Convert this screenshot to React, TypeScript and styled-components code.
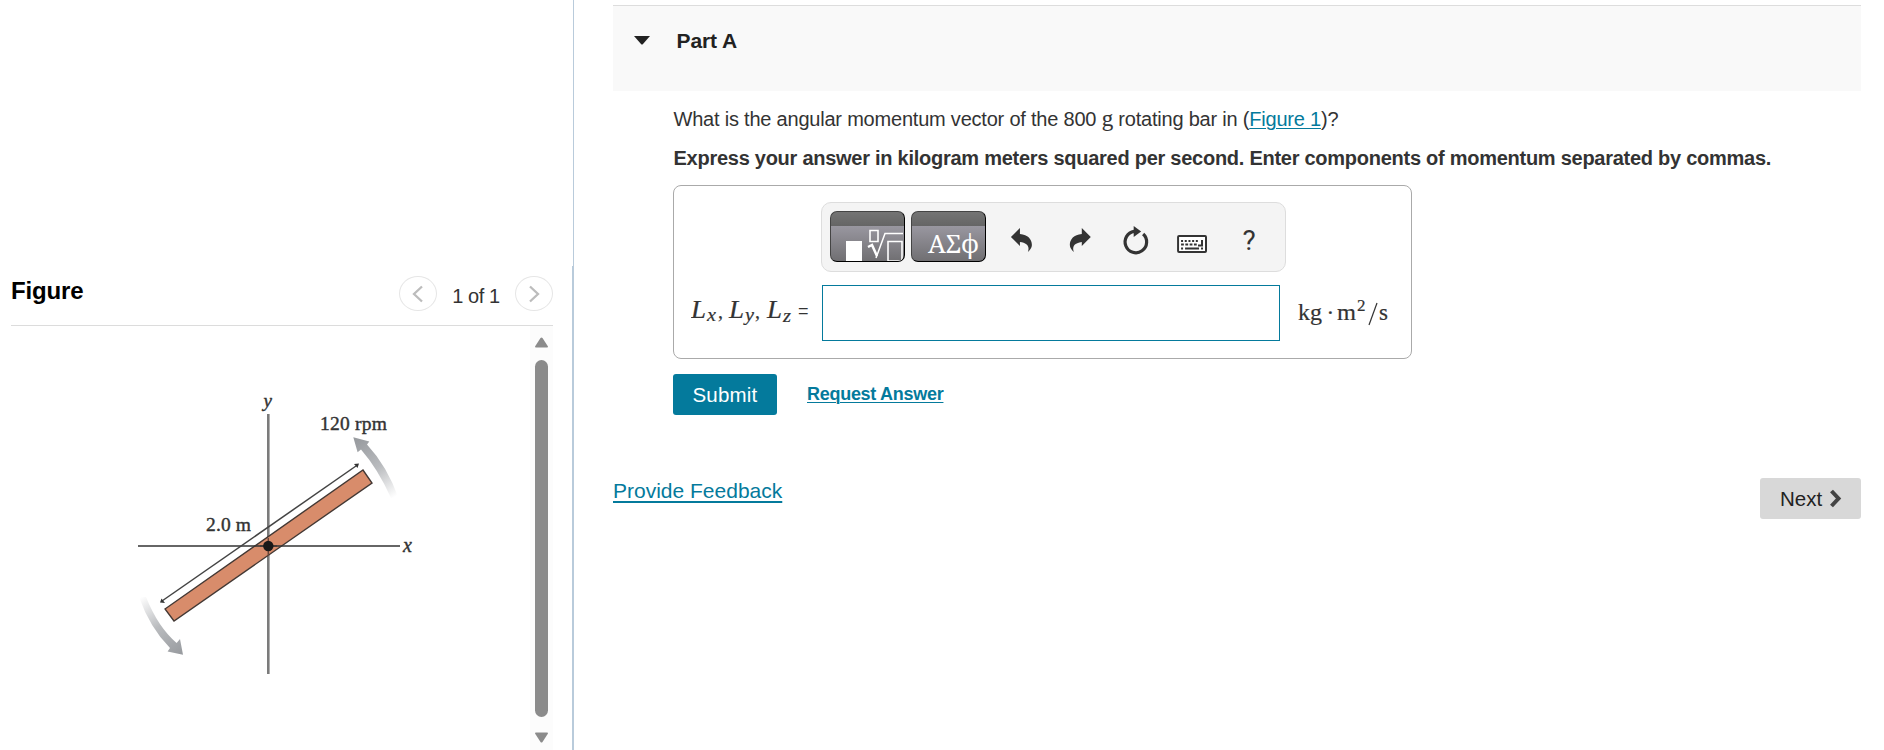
import React from 'react';
import styled, { createGlobalStyle } from 'styled-components';

const Global = createGlobalStyle`
  *{box-sizing:border-box}
  body{margin:0;background:#fff;color:#333;font-family:"Liberation Sans",Arial,sans-serif;overflow:hidden}
  p,h1,h2{margin:0}
`;
const Page = styled.div`display:flex;width:1884px;height:750px;background:#fff;`;
const FigurePane = styled.aside`width:574px;height:750px;display:flex;flex-direction:column;`;
const PaneTop = styled.div`height:266px;flex:none;border-right:1px solid #b9cbdb;`;
const PaneBody = styled.div`flex:1;border-right:2px solid #b9cbdb;padding-left:11px;`;
const FigureHeader = styled.div`width:542px;height:60px;border-bottom:1px solid #dcdcdc;display:flex;align-items:flex-start;padding-top:10px;`;
const FigureTitle = styled.h2`flex:1;font-size:24px;line-height:28px;font-weight:700;color:#000;padding-top:1px;letter-spacing:-.15px;`;
const PagerButton = styled.button`width:38px;height:35px;border-radius:50%;border:1px solid #e6e6e6;background:#fff;padding:0;display:grid;place-items:center;`;
const PagerText = styled.span`width:78px;text-align:center;font-size:20px;line-height:24px;padding-top:8px;color:#333;letter-spacing:-.4px;`;
const FigureScroll = styled.div`width:542px;height:424px;display:flex;`;
const FigureCanvas = styled.div`flex:1;padding:54px 0 0 109px;`;
const ScrollTrack = styled.div`width:23px;background:#fcfcfc;display:flex;flex-direction:column;align-items:center;padding-top:11px;`;
const ScrollThumb = styled.div`width:13px;height:357px;border-radius:7px;background:#8b8b8b;margin:12px 0 15px;`;
const Main = styled.main`margin-left:39px;width:1248px;padding-top:5px;`;
const PartHeader = styled.header`height:86px;background:#f9f9f9;border-top:1px solid #ddd;display:flex;padding:21px 0 0 21px;`;
const Caret = styled.svg`margin-top:9px;`;
const PartTitle = styled.h1`font-size:21px;line-height:28px;margin-left:26.5px;color:#222;letter-spacing:-.1px;`;
const Content = styled.section`padding:16px 0 0 60px;`;
const Question = styled.p`font-size:20px;line-height:24px;letter-spacing:-.21px;white-space:nowrap;padding-left:.5px;`;
const Serif = styled.span`font-family:"Liberation Serif",serif;font-size:23px;line-height:1;-webkit-text-stroke:.1px #333;`;
const Link = styled.a`color:#047a9c;text-decoration:underline;text-decoration-thickness:1px;text-underline-offset:2px;`;
const Instruction = styled.p`font-size:20px;line-height:24px;font-weight:700;margin-top:15px;white-space:nowrap;padding-left:.5px;letter-spacing:-.262px;`;
const AnswerBox = styled.div`width:739px;height:174px;border:1px solid #aaa;border-radius:8px;margin-top:15px;padding:16px 0 0 17px;`;
const Toolbar = styled.div`width:465px;height:70px;margin-left:130px;border:1px solid #ddd;border-radius:10px;background:#f4f4f4;display:flex;padding:8px;`;
const MathButton = styled.button`width:75px;height:51px;border:1px solid #444;border-right-color:#000;border-bottom:1px solid #000;border-radius:7px;padding:0;margin-right:6px;overflow:hidden;background:linear-gradient(#747474 0,#656565 14px,#9997a0 14px,#706f72 100%);`;
const ToolIcons = styled.svg`width:286px;height:52px;`;
const AnswerRow = styled.div`height:56px;margin-top:13px;display:flex;align-items:center;`;
const Variables = styled.div`width:131px;`;
const Field = styled.input`width:458px;height:56px;border:1px solid #047a9c;border-radius:0;background:#fff;padding:0;outline:0;`;
const Units = styled.div`margin-left:18px;`;
const Actions = styled.div`display:flex;align-items:center;margin-top:15px;`;
const Submit = styled.button`width:104px;height:41px;background:#047a9c;color:#fff;border:0;border-radius:3px;font:20.500px "Liberation Sans",Arial,sans-serif;letter-spacing:.2px;padding:1px 0 0;`;
const RequestLink = styled(Link)`font-size:18px;font-weight:700;margin:-2px 0 0 30px;line-height:24px;letter-spacing:-.28px;`;
const Footer = styled.footer`display:flex;justify-content:space-between;margin-top:63px;`;
const FeedbackLink = styled(Link)`font-size:21px;line-height:26px;text-decoration-thickness:2px;text-underline-offset:3px;`;
const Next = styled.button`width:101px;height:41px;border:0;border-radius:3px;background:#d8d8d8;color:#222;font:20.500px "Liberation Sans",Arial,sans-serif;padding:0 19px 0 20px;display:flex;align-items:center;justify-content:space-between;`;
const NextLabel = styled.span`padding-top:1px;`;

const serif = '"Liberation Serif", serif';

function Diagram() {
  return <svg width="310" height="310" viewBox="0 0 310 310" fontFamily={serif} fill="#333" style={{ display: 'block' }}>
    <defs>
      <linearGradient id="upper" gradientUnits="userSpaceOnUse" x1="276" y1="116" x2="238" y2="60"><stop offset="0" stopColor="#fff"/><stop offset=".5" stopColor="#b9bbbe"/><stop offset="1" stopColor="#999ca0"/></linearGradient>
      <linearGradient id="lower" gradientUnits="userSpaceOnUse" x1="21" y1="217" x2="60" y2="274"><stop offset="0" stopColor="#fff"/><stop offset=".5" stopColor="#b9bbbe"/><stop offset="1" stopColor="#999ca0"/></linearGradient>
    </defs>
    <path d="M148.300 34V294" stroke="#7b7b7b" strokeWidth="2.6"/>
    <path d="M45 229L243 90L252 103L54 241Z" fill="#d88c6b" stroke="#433834" strokeWidth="1.4"/>
    <path d="M148.300 158V176M140 166H157" stroke="#69473b" strokeWidth="1.500"/>
    <path d="M18 166H280" stroke="#333" strokeWidth="1.7"/>
    <path d="M42 221L236 86" stroke="#444" strokeWidth="1.5"/>
    <path d="M40 222.500L41.500 218.500L45 223ZM239 83.500L237.500 88L234 84Z"/>
    <circle cx="148.300" cy="166" r="5.200" fill="#191919"/>
    <path d="M271 118Q258 89 241 69.500L237.600 72.300L233.300 57.300L249.300 61.600L247 64.500Q267 86 278.500 118Z" fill="url(#upper)"/>
    <path d="M19 217Q30 248 50 268L47.600 271.500L63 274.800L60 259L56.600 263Q38 247 26 217Z" fill="url(#lower)"/>
    <g stroke="#333" strokeWidth=".4">
      <text x="143.500" y="26.500" fontSize="19" fontStyle="italic">y</text>
      <text x="283" y="172" fontSize="20" fontStyle="italic">x</text>
      <text x="200" y="50" fontSize="19.500" textLength="67">120 rpm</text>
      <text x="86" y="150.500" fontSize="19.500" textLength="45">2.0 m</text>
    </g>
  </svg>;
}

function Chevron({ left = false }: { left?: boolean }) {
  return <svg width="14" height="20" viewBox="0 0 14 20"><path d={left ? 'M11 2.500L3 10L11 17.500' : 'M3 2.500L11 10L3 17.500'} fill="none" stroke="#bcbcbc" strokeWidth="2.300"/></svg>;
}

export default function App() {
  return <><Global /><Page>
    <FigurePane>
      <PaneTop />
      <PaneBody>
        <FigureHeader>
          <FigureTitle>Figure</FigureTitle>
          <PagerButton aria-label="Previous figure"><Chevron left /></PagerButton>
          <PagerText>1 of 1</PagerText>
          <PagerButton aria-label="Next figure"><Chevron /></PagerButton>
        </FigureHeader>
        <FigureScroll>
          <FigureCanvas><Diagram /></FigureCanvas>
          <ScrollTrack>
            <svg width="15" height="11" viewBox="0 0 15 11"><path d="M1 9.500L6.500 1Q7.500 0 8.500 1L14 9.500L13.500 10.500H1.500Z" fill="#8b8b8b"/></svg>
            <ScrollThumb />
            <svg width="15" height="11" viewBox="0 0 15 11"><path d="M1 1.500L6.500 10Q7.500 11 8.500 10L14 1.500L13.500 .500H1.500Z" fill="#8b8b8b"/></svg>
          </ScrollTrack>
        </FigureScroll>
      </PaneBody>
    </FigurePane>
    <Main>
      <PartHeader>
        <Caret width="16" height="9" viewBox="0 0 16 9"><path d="M0 0H16L9 8Q8 9 7 8Z" fill="#222"/></Caret>
        <PartTitle>Part A</PartTitle>
      </PartHeader>
      <Content>
        <Question>What is the angular momentum vector of the 800 <Serif>g</Serif> rotating bar in (<Link>Figure 1</Link>)?</Question>
        <Instruction>Express your answer in kilogram meters squared per second. Enter components of momentum separated by commas.</Instruction>
        <AnswerBox>
          <Toolbar>
            <MathButton aria-label="Templates"><svg width="73" height="50" viewBox="0 0 73 50" fill="none" stroke="#fff"><path d="M15 29H31V50H15Z" fill="#fff" stroke="none"/><path d="M39 18.500H47V29.500H39Z" strokeWidth="1.600"/><path d="M37 35L41 33L46 44" strokeWidth="2.500"/><path d="M45 46L54 21.500H72" strokeWidth="1.500"/><path d="M57 29.500H71V49H57Z" strokeWidth="1.600"/></svg></MathButton>
            <MathButton aria-label="Symbols"><svg width="73" height="50"><text x="16" y="41" fill="#fff" fontFamily={'"Noto Serif", "Liberation Serif", serif'} fontSize="26" textLength="51" lengthAdjust="spacingAndGlyphs">ΑΣϕ</text></svg></MathButton>
            <ToolIcons viewBox="0 0 286 52" fill="#333">
              <path d="M19 26L28 17V23C36 24 40 28 40 34C40 37 38 39 36 41C38 35 35 32 28 31V35Z"/>
              <path d="M99 26L90 17V23C82 24 78 28 78 34C78 37 80 39 82 41C80 35 83 32 90 31V35Z"/>
              <path d="M142.500 20.300A10.800 10.800 0 1 0 151.500 23" fill="none" stroke="#333" strokeWidth="3.200"/><path d="M142 15L149.500 20.500L142 26Z"/>
              <rect x="186.500" y="25" width="28" height="16" rx="1" fill="#fff" stroke="#333" strokeWidth="2"/>
              <g stroke="#333" strokeWidth="2"><path d="M189.500 30H208" strokeDasharray="2 1.700"/><path d="M189.500 33.500H206" strokeDasharray="2.800 1.500"/><path d="M189.500 37.500H191.500M193.500 37.500H207.500M209.500 37.500H211.500"/><path d="M210.500 29V34.500H206.500" fill="none"/></g>
              <text x="251" y="39" fontFamily="Roboto, sans-serif" fontSize="28">?</text>
            </ToolIcons>
          </Toolbar>
          <AnswerRow>
            <Variables><svg width="130" height="44" fill="#333" fontFamily={serif}><g stroke="#333" strokeWidth=".2"><g fontStyle="italic" fontSize="25"><text x="0" y="29" textLength="15" lengthAdjust="spacingAndGlyphs">L</text><text x="38" y="29" textLength="15" lengthAdjust="spacingAndGlyphs">L</text><text x="76" y="29" textLength="15" lengthAdjust="spacingAndGlyphs">L</text><g fontSize="18"><text x="16" y="32" textLength="9" lengthAdjust="spacingAndGlyphs">x</text><text x="54" y="32" textLength="9" lengthAdjust="spacingAndGlyphs">y</text><text x="92" y="33" textLength="8" lengthAdjust="spacingAndGlyphs">z</text></g></g><g fontSize="20"><text x="27" y="29">,</text><text x="64" y="29">,</text></g></g><text x="107" y="28" fontFamily='"Liberation Sans", sans-serif' fontSize="18">=</text></svg></Variables>
            <Field aria-label="Angular momentum components" />
            <Units><svg width="95" height="44" fill="#333" fontFamily={serif} fontSize="23"><g stroke="#333" strokeWidth=".2"><text x="0" y="31" textLength="24" lengthAdjust="spacingAndGlyphs">kg</text><text x="28.500" y="31">·</text><text x="39" y="31" textLength="19" lengthAdjust="spacingAndGlyphs">m</text><text x="59" y="22" fontSize="17">2</text></g><path d="M71 36L79 14" stroke="#333" strokeWidth="1.200"/><text x="81" y="31" stroke="#333" strokeWidth=".2">s</text></svg></Units>
          </AnswerRow>
        </AnswerBox>
        <Actions><Submit>Submit</Submit><RequestLink>Request Answer</RequestLink></Actions>
      </Content>
      <Footer><FeedbackLink>Provide Feedback</FeedbackLink><Next><NextLabel>Next</NextLabel><svg width="13" height="19" viewBox="0 0 13 19"><path d="M2.500 2L9.500 9.500L2.500 17" fill="none" stroke="#444" strokeWidth="4"/></svg></Next></Footer>
    </Main>
  </Page></>;
}
